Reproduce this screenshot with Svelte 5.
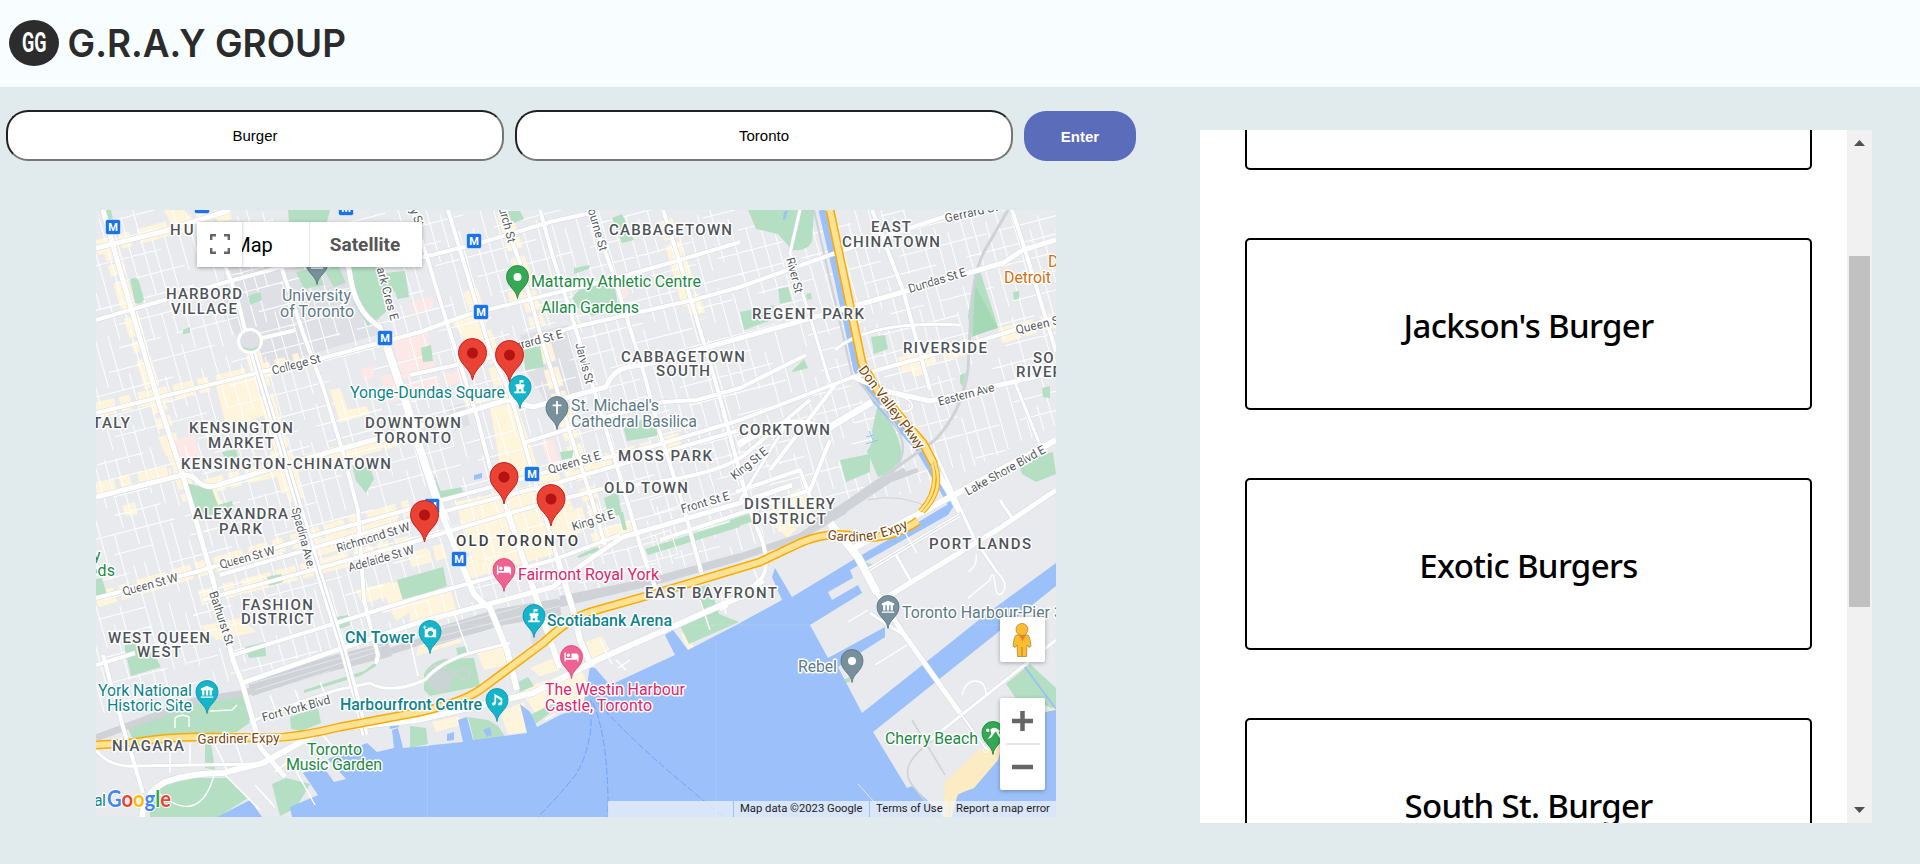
<script>
  let food = $state('Burger');
  let city = $state('Toronto');
  const results = ['', "Jackson's Burger", 'Exotic Burgers', 'South St. Burger'];

  // Small deterministic generator so side streets are laid out the same way each time.
  let seed = 11;
  const rnd = () => (seed = (seed * 16807) % 2147483647) / 2147483647;

  function sideStreets() {
    let d = '';
    for (let x = -60; x < 1060; x += 10 + rnd() * 6) {
      let y = 205 + rnd() * 30;
      while (y < 740) {
        const len = 35 + rnd() * 90;
        const a = x + 0.28 * (y - 210);
        d += `M${a.toFixed(1)} ${y.toFixed(1)}l${(0.28 * len).toFixed(1)} ${len.toFixed(1)}`;
        y += len + 8 + rnd() * 34;
      }
    }
    for (let c = 225; c < 1010; c += 17 + rnd() * 10) {
      let x = 90 + rnd() * 30;
      while (x < 1060) {
        const len = 30 + rnd() * 80;
        const b = c - 0.26 * (x - 96);
        d += `M${x.toFixed(1)} ${b.toFixed(1)}l${len.toFixed(1)} ${(-0.26 * len).toFixed(1)}`;
        x += len + 8 + rnd() * 50;
      }
    }
    return d;
  }
  const side = sideStreets();

  const parks = [
    'M288 210h42l-3 12h-38z', 'M348 262l28 0 10 50-18 14-14-22z', 'M375 274l30-3 4 26-12 2-2-8-14 4z',
    'M130 279q7-3 9 2l5 18q-2 6-9 4z', 'M248 296l12-4 2 8-12 5z', 'M296 272l22-5 6 18-20 4z', 'M324 270l14-5 8 18-12 4z',
    'M183 330l7-3v6l-7 1z', 'M186 483l26 6 6 16 14-4 2 10-38 6z', 'M222 452l14-3 2 8-13 1z',
    'M352 465l18 2 4 12-8 14-10-12z', 'M572 298l8-9 34-7 4 24-25 10-15-8z', 'M574 268l16-3-1 4-15 5z',
    'M612 218l10-4 12 26-12 3z', 'M508 211l12 0 4 8-12 5z', 'M524 350l16-4 4 21-19 3z', 'M421 348l10-3 2 16-10 1z',
    'M435 475l6 16 20-4 3 6-24 5-5-20z', 'M623 426l32-10 2 12 0 8-30 5z', 'M560 452l14-2-2 8-10 2z',
    'M604 498l14-6 4 24-14-2z', 'M748 210h66l-2 32q-6 10-20 8l-14-16-22-5z', 'M740 312l34-7-2 15-28 10z',
    'M778 289l10-2 4 14-12 3z', 'M806 294l5-1 1 6-5 1z', 'M871 337l14-2 3 14-14 5z', 'M975 272l5-1 18 56-26 10-4-20z',
    'M960 375l6-2-3 14-3-4z', 'M792 371l12-12 4 9-15 4z', 'M878 402q22 30 24 55-8 14-24 20l-11-26q8-10 5-20z',
    'M840 460l30-6 0 18-24 10z', 'M1017 460l36-8 3 22-20 8-14-8z', 'M1042 388l8-2v12l-7-1z', 'M1013 292l6-1 0 8-5 1z',
    'M397 580l46-13 4 19-44 15z', 'M267 577l14-3 2 8-14 4z', 'M336 617l12-2 2 10-13 5z', 'M245 647l20-5 1 14-17 2z',
    'M125 632l14 0 0 20 14 0 8 15-30 9-6-26z', 'M96 579l6-1 5 17-11 4z', 'M128 728l22-12 60-16 35-4 8 24-16 12-40 4-65 2z',
    'M290 717l28-10 3 16-20 8-10-2z', 'M205 744l6 0 4 26-10-2z', 'M150 790l40-12 38 0 20 20-30 19h-68z',
    'M272 784l14-6 24 6-14 24-16 8z', 'M424 674q6-12 20-15l30-1 6 28-50 10-6-6z', 'M456 648l10-2 1 8-9 2z',
    'M468 717l20 3 10 6 8 12-32 3z', 'M410 726l16 2 2 16-18 4z', 'M516 683l12-6 6 9-14 6z', 'M530 715l24-12 6 2-18 14-7 5z',
    'M577 556l20-9 4 3-22 8z', 'M645 549l95-30v8l-92 28z', 'M697 588l12-4 10 30 20 8-50 22-10-20 24-10z',
    'M618 512l5 0 4 18-4 0z', 'M865 562l12 4-12 3z', 'M730 520l24-8 0 9-24 8z', 'M843 680l7-3 0 5-5 1z',
    'M1006 684l24-20 26 24v22l-18-8-14 8z', 'M304 690l60-19 12-9v4l-16 10-56 17z', 'M104 210l5 12 4-2-2-10z'
  ];
  const creams = [
    'M116 285l9-2 8 22-10 4z', 'M215 382l38-11 12 44-26 10-14-4z', 'M330 390l10-2 8 22 18-4 4 8-30 9z', 'M452 322l30-9 6 36-14 2z',
    'M490 408l26-6 24 72-36 12z', 'M460 395l34-8 4 12-32 6z', 'M508 292l14-2 4 14-16 0z', 'M666 248l14-4 14 60-12 2z', 'M122 506l13-4 3 12-12 2z',
    'M158 437l14-3 6 18-12 4z', 'M204 490l10-2 14 24-8 3z', 'M270 452l14-4 12 40-14 6z', 'M345 450l60-16 4 6-46 14-10 12z',
    'M380 585l24-4 8 30-16 10z', 'M356 590l34-8 6 12-34 10z', 'M300 545l96-29 2 16-92 28z', 'M455 502l106-22 22 52-108 30z', 'M455 560l90-24 10 18-90 26z',
    'M590 534l40-14 8 12-42 16z', 'M410 600l40-12 8 28-48 12z', 'M420 640l36-16 6 18-46 14z', 'M476 650l24-6 12 20-28 6z',
    'M586 642l16-6 8 14-18 10z', 'M520 690l60-22 16 34-60 12z', 'M500 712l24-10 4 30-20 2z', 'M432 722l26-6 6 8-28 8z', 'M232 588l12-3 2 8-10 2z',
    'M908 365l18-4 2 12-14 4z', 'M770 504l30-16 10 26-22 24-14-12z', 'M200 626l40-8 16 14-40 8z', 'M680 632l8 18 6-2-6-14z', 'M530 668l24-10 6 12-20 6z', 'M164 210l20-2 6 18-16 4z'
  ];
  const pinks = ['M174 440l20-6 6 22-16 16-6-10z', 'M361 369l12-3 2 12-12 3z', 'M380 376l12-3 10 26-12 4z', 'M393 341l33-10 10 40-34 9z', 'M412 302l20-6 2 12-20 6z', 'M541 442l12-3 6 22-10 3z', 'M620 290l8-3 0 10-6 2z', 'M405 386l34-9 2 14-30 8z', 'M444 374l16-4 2 12-14 4z'];
  const campus = ['M225 262l120-14 42 84-130 38-34-56z', 'M520 335l48-10 14 66-36 10-20-30z', 'M448 408l16-5 6 22-16 6z', 'M528 620l14-4 10 26-18 12z'];

  const roads = [
    [5, 'M103 210L120 270L158 400L182 473L190 500L213 580L233 660L242 683L252 717L260 747L285 777'],
    [4, 'M222 257L237 297L245 330'], [7, 'M253 353L267 400L297 500L317 567L343 650L357 700L365 735'],
    [4, 'M270 225L280 263L303 333L323 387L343 453L358 510L364 600L372 633L378 655L376 664'],
    [5, 'M342 230L350 275Q355 312 380 327L387 347L403 400'], [8, 'M387 347L405 400L418 443L437 500L446 520'],
    [6, 'M443 517L460 560L474 594Q482 603 490 608L507 650L517 690'], [4, 'M412 210L430 267L447 323L477 417L490 467L507 510'],
    [6, 'M507 510L537 600L548 634L560 668'], [4, 'M448 210L467 273L490 350L510 393L527 453L557 557'], [6, 'M557 557L573 610L580 640L592 667'],
    [4, 'M500 210L520 263L543 343L570 433L592 500L605 545'], [4, 'M540 210L553 257L577 333L613 453L643 555L660 600'],
    [4, 'M590 210L613 273L643 370L660 433L683 505L702 575'], [4, 'M663 210L680 263L717 387L750 510L763 543Q770 570 760 580L740 597'],
    [3, 'M800 210L790 253L810 317L830 383'], [4, 'M872 210L903 290L930 390'], [4, 'M1012 210L1025 250L1056 352'],
    [3, 'M1014 380L1040 445'], [3, 'M935 453L955 497L975 540L997 572'],
    [5, 'M96 248L165 231L230 210'], [4, 'M96 320L130 310L223 283L285 266L345 262'], [4, 'M96 413L257 373L323 358L420 332L467 315L567 290L617 278L680 260L740 242'],
    [4, 'M250 341L296 330'], [4, 'M410 375L493 357L570 328L693 300L740 287L830 255L940 218L1000 205'],
    [5, 'M96 497L182 475Q193 474 198 482Q207 489 218 485L290 463L373 440L507 400L533 407L606 387Q613 370 628 367L648 364L740 338L840 310L903 292L1003 263L1023 250L1056 240'],
    [4, 'M523 443L613 415L663 402L697 400L740 388L806 355'], [4, 'M96 598L203 570L323 533L443 500L543 473L657 445L740 420L853 377L960 347L1056 317'],
    [4, 'M203 600L410 543L520 510L605 488Q720 478 748 452L810 400'], [4, 'M220 575L410 520L560 482L740 430'],
    [4, 'M96 665L135 653'], [4, 'M233 655L330 625L410 600L553 560L620 535'], [5, 'M242 683L337 650L420 622L553 587Q580 565 623 537L740 503L792 485'],
    [3, 'M250 722L300 702L337 690L370 683Q390 695 425 680Q440 662 470 653L510 643'],
    [6, 'M142 817Q145 792 165 782Q190 773 223 773L263 763L323 730L417 720L533 693L597 660L740 597L763 580'],
    [4, 'M103 655L123 727L143 793'], [3, 'M96 750Q110 768 135 766L260 764'], [4, 'M420 258L480 243L550 222L590 213'],
    [4, 'M660 540L810 490L830 440'], [5, 'M853 377L890 392L930 401L1056 372'], [7, 'M738 445Q790 410 825 430L872 402'],
    [4, 'M770 470L835 385'], [3, 'M740 500L790 418'], [4, 'M736 492L800 470L815 510'],
    [8, 'M830 523L858 557L877 593'], [6, 'M850 550L930 508L1056 440'], [6, 'M933 465L952 497L960 512'], [5, 'M1056 490L1000 528L887 597'],
    [5, 'M877 593L903 633L960 713'], [2, 'M960 713L987 750'], [3, 'M870 613L902 634'], [3, 'M930 740L1056 640'],
    [4, 'M868 570L960 515'], [3, 'M896 555L912 583'], [3, 'M1000 500L1014 521'],
    [3, 'M835 350Q870 320 960 325'], [2, 'M886 393Q915 398 912 408Q905 416 880 406']
  ];
  const commercial = 'M96 248L230 212M96 410L257 373L300 360M108 240L150 380L190 500M96 490L182 470M205 487L400 438M253 353L297 500M96 600L410 507M470 290L540 500M505 215L590 500M540 480L680 440M665 220L700 320M410 560L600 510M200 598L410 543M900 365L980 343M1000 336L1056 320';

  const hoods = [
    ['HURON', 171, 62, 235], ['HARBORD', 167, 75, 299], ['VILLAGE', 172, 65, 314], ['ITALY', 88, 42, 428], ['KENSINGTON', 190, 103, 433], ['MARKET', 209, 65, 448],
    ['KENSINGTON-CHINATOWN', 182, 209, 469], ['DOWNTOWN', 366, 95, 428], ['TORONTO', 375, 76, 443], ['ALEXANDRA', 194, 94, 519], ['PARK', 220, 42, 534],
    ['FASHION', 243, 70, 610], ['DISTRICT', 242, 72, 624], ['WEST QUEEN', 109, 101, 643], ['WEST', 138, 43, 657], ['NIAGARA', 113, 71, 751],
    ['CABBAGETOWN', 610, 122, 235], ['EAST', 872, 39, 232], ['CHINATOWN', 843, 97, 247], ['REGENT PARK', 753, 111, 319], ['RIVERSIDE', 904, 83, 353],
    ['SOUTH', 1034, 53, 363], ['RIVERDALE', 1017, 86, 377], ['CABBAGETOWN', 622, 123, 362], ['SOUTH', 657, 53, 376], ['MOSS PARK', 619, 93, 461],
    ['OLD TOWN', 605, 83, 493], ['CORKTOWN', 740, 90, 435], ['DISTILLERY', 745, 90, 509], ['DISTRICT', 753, 73, 524], ['EAST BAYFRONT', 646, 131, 598],
    ['OLD TORONTO', 457, 121, 546, 'strong'], ['PORT LANDS', 930, 101, 549]
  ];
  const places = [
    ['University', 283, 68, 301, 'slate'], ['of Toronto', 281, 73, 317, 'slate'], ['Mattamy Athletic Centre', 532, 169, 287, 'green'], ['Allan Gardens', 542, 97, 313, 'green'],
    ['Yonge-Dundas Square', 351, 154, 398, 'teal'], ["St. Michael's", 572, 87, 411, 'slate'], ['Cathedral Basilica', 572, 125, 427, 'slate'],
    ['Fairmont Royal York', 519, 140, 580, 'pink'], ['Scotiabank Arena', 548, 124, 626, 'teal bold'], ['CN Tower', 346, 69, 643, 'teal bold'],
    ['York National', 99, 93, 696, 'teal'], ['Historic Site', 108, 84, 711, 'teal'], ['Harbourfront Centre', 341, 141, 710, 'teal bold'],
    ['The Westin Harbour', 546, 139, 695, 'pink'], ['Castle, Toronto', 546, 106, 711, 'pink'], ['Toronto', 308, 54, 755, 'green'], ['Music Garden', 287, 95, 770, 'green'],
    ['Toronto Harbour-Pier', 903, 147, 618, 'slate'], ['3', 1055, 8, 618, 'slate'], ['Rebel', 799, 38, 672, 'slate'], ['Cherry Beach', 886, 92, 744, 'green'],
    ['Detroit', 1005, 46, 283, 'orange'], ['D', 1049, 10, 267, 'orange'], ['y', 94, 7, 561, 'green'], ['ods', 89, 26, 576, 'green'], ['al', 95, 11, 806, 'teal']
  ];
  const streets = [
    ['College St', 296, 364, -15, 50], ['Queen St W', 150, 584, -15, 57], ['Queen St W', 247, 557, -15, 57], ['Richmond St W', 373, 537, -17, 76], ['Adelaide St W', 381, 558, -16, 68],
    ['Spadina Ave.', 304, 538, 75, 63], ['Bathurst St', 222, 618, 72, 56], ['Fort York Blvd', 296, 708, -15, 70], ['Park Cres E', 387, 290, 75, 62], ['Bay St', 415, 211, 68, 32], ['Church St', 506, 218, 75, 50],
    ['Sherbourne St', 594, 215, 74, 74], ['Jarvis St', 585, 363, 75, 42], ['Gerrard St E', 533, 341, -15, 61], ['Queen St E', 574, 462, -16, 54], ['King St E', 593, 520, -17, 44],
    ['Front St E', 705, 502, -16, 50], ['King St E', 749, 463, -39, 44], ['River St', 795, 275, 75, 36], ['Dundas St E', 937, 280, -17, 60], ['Gerrard St E', 976, 211, -13, 64],
    ['Queen St E', 1044, 323, -13, 58], ['Eastern Ave', 966, 394, -15, 58], ['Lake Shore Blvd E', 1005, 470, -29, 90]
  ];
  const metros = [[113, 227], [202, 206], [346, 208], [385, 338], [474, 241], [481, 312], [532, 474], [432, 506], [459, 559]];
  const pins = [
    [517.5, 277, '#34a853', '#188038', 'dot'], [520, 387, '#12b5cb', '#0f8f9f', 'hall'], [557, 408, '#78909c', '#546e7a', 'cross'], [504, 570, '#f06292', '#d84377', 'bed'],
    [534, 616, '#12b5cb', '#0f8f9f', 'hall'], [430, 632, '#12b5cb', '#0f8f9f', 'camera'], [497, 700, '#12b5cb', '#0f8f9f', 'note'], [571.5, 657, '#f06292', '#d84377', 'bed'],
    [207, 692, '#12b5cb', '#0f8f9f', 'museum'], [888, 607, '#78909c', '#546e7a', 'museum'], [852, 661, '#78909c', '#546e7a', 'dot'], [993, 733, '#34a853', '#188038', 'beach'], [317, 263, '#78909c', '#546e7a', 'museum']
  ];
  const glyphs = {
    hall: 'M-.5-8H4V-5H.8V-3H5V0H4V5H6.500V7H-6.500V5H-4V0H-5V-3H-.5ZM-1.300 2.500V5H1.300V2.500Z',
    cross: 'M-1-8H1V-4H5V-2H1V7H-1V-2H-5V-4H-1Z',
    bed: 'M-8-5H-6.500V1H0V-4H5Q8-4 8-1V5H6.500V3H-6.500V5H-8ZM-5.500-2A2 2 0 1 0-1.500-2A2 2 0 1 0-5.500-2',
    camera: 'M-6-3H-3L-2-5H3L4-3H7V6H-6ZM-8-6H-6.500V-7.500H-5.500V-6H-4V-5H-5.500V-3.500H-6.500V-5H-8Z',
    note: 'M-3-7L6-2V4Q5 7 2 6Q0 4 3 2.500H4V0L-1-3V3Q-2 7-5 6Q-7 3.500-3 2Z',
    museum: 'M-7-4L0-7L7-4V-2H-7ZM-5.500-2H-3V4H-5.500ZM-1.300-2H1.300V4H-1.300ZM3-2H5.500V4H3ZM-7 5H7V6.500H-7Z',
    beach: 'M-8-3a2 2 0 1 0 4 0a2 2 0 1 0-4 0M-3-4Q2-9 8-2L6-1L10 5L8 6L3-2L-2 5L-6 7L-2 1Z'
  };
  const markers = [[472.5, 353], [509.5, 355], [504, 477], [551, 499], [424.5, 515]];
</script>

<header>
  <svg class="logo" width="50" height="46" viewBox="0 0 50 46" role="img" aria-label="GG">
    <ellipse cx="25" cy="23" rx="25" ry="23" fill="#2d2c2c" />
    <text x="13" y="32" textLength="24.500" lengthAdjust="spacingAndGlyphs">GG</text>
  </svg>
  <svg class="brand" width="290" height="46" viewBox="0 0 290 46">
    <text x="-1.500" y="36.500" textLength="278.500" lengthAdjust="spacingAndGlyphs">G.R.A.Y GROUP</text>
  </svg>
</header>

<main>
  <section class="left">
    <form onsubmit={(e) => e.preventDefault()}>
      <input bind:value={food} aria-label="Food" />
      <input bind:value={city} aria-label="City" />
      <button>Enter</button>
    </form>

    <div class="map">
      <svg width="960" height="607" viewBox="96 210 960 607">
        <defs>
          <clipPath id="urban"><path d="M96 210H1056V425L930 490L830 505L740 552L610 590L440 625L340 655L240 678L96 715Z" /></clipPath>
          <path id="gardiner-label" d="M827 539Q872 548 915 524" />
        </defs>
        <rect x="96" y="210" width="960" height="607" fill="#e8eaed" />
        {#each campus as d}<path {d} fill="#dfe0e5" />{/each}
        <path d={commercial} class="commercial" />
        {#each creams as d}<path {d} fill="#fef5dc" />{/each}
        {#each pinks as d}<path {d} fill="#fce8e6" />{/each}
        <path d={side} clip-path="url(#urban)" class="side" />
        {#each parks as d}<path {d} fill="#b4dfc3" />{/each}
        <path d="M975 285L998 328L973 336Z" fill="#a5d9b5" />

        <g fill="#9cc0f9">
          <path d="M217 817L250 800L262 817ZM292 817L290 807L318 795L303 773L322 765L334 782L346 779L328 759L367 743L377 752L394 748L392 730L398 728L403 748L427 746L433 745L463 742L458 720L467 717L473 740L527 733L520 704L530 712L537 727L560 715L583 707L590 667L595 668L610 685L675 655L665 635L673 630L688 650L740 623L782 600L772 577L775 568L792 597L853 560L900 533L950 503L955 504L948 515L850 570L853 578L828 592L832 600L858 585L862 593L810 625L828 658L885 627L885 637L838 667L862 713L940 651L985 615L1056 563V586L873 732L907 788L912 786L927 800L945 817Z" />
          <path d="M1056 709L1020 720L1000 750L973 787L957 795L952 817H1056Z" />
          <path d="M389 724l9-2 1 5-9 2zM447 734l7-2 0 8-7 1zM483 730l7-3 2 8-5 2zM474 475l8-2 0 5-8 2zM784 212l4-2-3 10-2 0z" />
        </g>
        <path d="M945 782L978 750L1002 745L998 760L974 788L958 794L951 817H943Z" fill="#fdebc3" />
        <path d="M1040 715l16-9v4l-14 2z" fill="#fdebc3" />
        <path d="M822 210L838 280L857 370L877 402L920 450L952 505" fill="none" stroke="#9cc0f9" stroke-width="7" />
        <path d="M1024 666L1056 709" stroke="#9cc0f9" stroke-width="2" />
        <path d="M866 437l8-2m-5-4l4 9m-7 4l12-4" stroke="#9cc0f9" fill="none" />

        <g fill="none" stroke="#cfd2d7">
          <path d="M96 738L195 701L240 694L320 669L378 655L410 645L470 624L575 600L650 582L740 557L800 537L845 510" stroke-width="7" />
          <path d="M250 689L330 664L390 649" stroke-width="15" />
          <path d="M425 640L500 617L560 607" stroke-width="17" />
          <path d="M560 600L650 582L740 557" stroke-width="8" />
          <path d="M815 525L870 488L905 470M830 520L890 480L918 470" stroke-width="5" />
          <path d="M800 535L900 465L935 440Q962 412 968 370L971 310Q974 270 985 250L1008 210" stroke-width="3" />
          <path d="M814 210L830 280L852 374L878 404Q908 435 902 455Q897 475 870 490L815 520" stroke-width="2.2" />
          <path d="M912 720L945 775M936 738Q895 765 913 786L926 802" stroke-width="1.5" />
          <path d="M868 500Q900 492 935 510" stroke-width="1" />
        </g>
        <g fill="none" stroke="#eef0f2" stroke-width=".7">
          <path d="M250 684L385 645M255 690L380 651M260 694L330 671M420 634L520 607M425 640L560 606M430 645L540 618" />
        </g>
        <circle cx="440" cy="681" r="11" fill="#cfd2d7" opacity=".85" />
        <path d="M428 670q8-8 18-2l16 11q8 2 7-6-4-8-14 0l-12 8" fill="none" stroke="#cfd2d7" stroke-width="2" />

        {#each roads as [w, d]}<path {d} class="casing" stroke-width={w + 1} />{/each}
        {#each roads as [w, d]}<path {d} class="road" stroke-width={w} />{/each}
        <path d="M253 353L297 500L317 567L343 650L365 735M868 570L960 515" class="median" />
        <circle cx="250" cy="341" r="11.500" fill="#dfe0e5" stroke="#fff" stroke-width="3" />
        <path d="M241 345q9 7 18 0l-2 4q-7 3-13 0z" fill="#b4dfc3" />

        <g fill="none" stroke="#fff" stroke-width="1.4">
          <path d="M175 728v-10q6-5 14-1v10M210 711l22-1 5-5M155 790q45 40 60-18M170 745v28M215 745l12 25M190 765v-22M233 735l10 30M255 785l20 22M225 775l35 35M275 772l15-12 25 45M318 730l18 20M968 572q10-6 8-18M997 572q12 12 6 20t-8-8-5-4l-22 18M875 665l32-20M848 622l20-12M962 695q4-15 14-14t10 14M750 560l12 30M905 533l12 20M545 720l10-6M616 660l10 10m-8-2l12-8M700 600l10 30M720 590l6 24M270 695l8 22M295 690l8 20M320 682l8 20M410 640l8 36M455 615l14 40M265 740l45-5M720 610l8-4M600 640l12 24" />
        </g>
        <g fill="none" stroke="#fff" stroke-width="1"><path d="M640 540l30-10 8 24-30 8zM655 535l8 24M650 500l24-8 5 14-24 8z" /></g>
        <circle cx="986" cy="750" r="2.5" fill="none" stroke="#fff" />

        <g fill="none" stroke-linejoin="round">
          <path d="M96 745L130 743Q165 737 200 737L270 738Q300 737 340 727L420 712Q460 703 480 690L543 643Q570 618 590 612L657 593L760 562L800 543Q830 530 860 537Q890 540 918 521M830 210L853 320L862 363L877 390L923 443L934 464" stroke="#f9ab00" stroke-width="9" />
          <path d="M96 745L130 743Q165 737 200 737L270 738Q300 737 340 727L420 712Q460 703 480 690L543 643Q570 618 590 612L657 593L760 562L800 543Q830 530 860 537Q890 540 918 521M830 210L853 320L862 363L877 390L923 443L934 464" stroke="#fde293" stroke-width="6" />
          <path d="M932 463Q940 490 920 511M935 463Q945 490 923 512" stroke="#f9ab00" stroke-width="4.5" />
          <path d="M932 463Q940 490 920 511M935 463Q945 490 923 512" stroke="#fde293" stroke-width="2.4" />
          <path d="M591 700V727Q588 755 575 776Q555 800 538 817M593 703Q609 740 608 817M598 703Q640 750 724 817" stroke="#72a3f5" stroke-dasharray="7 2.5" />
          <path d="M858 784L875 803L885 817" stroke="#dfe7f3" />
          <path d="M427.500 746V817M716 640V817M1003 500V690M96 625H1000" stroke="#fff" opacity=".15" />
        </g>

        <g class="street">
          {#each streets as [t, x, y, r, w]}
            <text transform="translate({x} {y}) rotate({r})" y="4.500" x={-w / 2} textLength={w}>{t}</text>
          {/each}
        </g>
        <g class="highway-name">
          <text x="197.500" y="743" textLength="82" transform="rotate(-1 239 738)">Gardiner Expy</text>
          <text><textPath href="#gardiner-label" textLength="84">Gardiner Expy</textPath></text>
          <text transform="translate(892 407) rotate(53)" x="-50" y="5" textLength="100">Don Valley Pkwy</text>
        </g>

        {#each metros as [x, y]}
          <g transform="translate({x} {y})">
            <rect x="-7.500" y="-7.500" width="15" height="15" rx="2" fill="#1a73e8" stroke="#fff" stroke-opacity=".5" />
            <text class="metro" text-anchor="middle" y="4">M</text>
          </g>
        {/each}
        {#each hoods as [t, x, w, y, c]}<text class="hood {c ?? ''}" x={x - 1} {y} textLength={w + 1}>{t}</text>{/each}
        {#each places as [t, x, w, y, c]}<text class="place {c}" x={x - 1} {y} textLength={w + 1}>{t}</text>{/each}

        {#each pins as [x, y, fill, edge, icon]}
          <g transform="translate({x} {y})">
            <path d="M0 21.500C-1 12-11 10-11-.5A11 11 0 0 1 11-.5C11 10 1 12 0 21.500Z" {fill} stroke={edge} stroke-width=".8" />
            {#if icon === 'dot'}<circle r="4" fill="#fff" />{:else}<path d={glyphs[icon]} fill="#fff" fill-rule="evenodd" transform="scale(.88)" />{/if}
            {#if icon === 'camera'}<circle cx=".5" cy="1.300" r="2.600" {fill} />{/if}
          </g>
        {/each}
        {#each markers as [x, y]}
          <g transform="translate({x} {y})">
            <path d="M0 27C-2 14-14 12-14-.5A14 14 0 0 1 14-.5C14 12 2 14 0 27Z" fill="#ea4335" stroke="#c5221f" />
            <circle r="5.500" fill="#b31412" />
          </g>
        {/each}

        <text class="google" x="107" y="807" textLength="64" lengthAdjust="spacingAndGlyphs"><tspan fill="#4285f4">G</tspan><tspan fill="#ea4335">o</tspan><tspan fill="#fbbc04">o</tspan><tspan fill="#4285f4">g</tspan><tspan fill="#34a853">l</tspan><tspan fill="#ea4335">e</tspan></text>
      </svg>

      <div class="types">
        <button class="type on">Map</button>
        <button class="type">Satellite</button>
        <button class="full" aria-label="Toggle fullscreen">
          <svg width="20" height="20" viewBox="0 0 20 20"><path d="M1.200 6V1.200H6M14 1.200h4.800V6M18.800 14v4.800H14M6 18.800H1.200V14" fill="none" stroke="#666" stroke-width="2.400" /></svg>
        </button>
      </div>

      <button class="pegman" aria-label="Street View">
        <svg width="20" height="34" viewBox="0 0 20 34">
          <g fill="#fbbc2d" stroke="#a8893f" stroke-width=".8">
            <path d="M4 12L16 12Q18 14 19 23Q17 26 15 22L14.500 33.500H5.500L5 22Q3 26 1 23Q2 14 4 12Z" />
            <circle cx="10" cy="6.500" r="6" />
          </g>
          <path d="M7 12h7l-3.500 6z" fill="#e37f32" /><path d="M10 24v9" stroke="#a8893f" />
        </svg>
      </button>

      <div class="zoom">
        <button aria-label="Zoom in"><svg width="21" height="20" viewBox="0 0 21 20"><path d="M0 10h21M10.500 0v20" stroke="#666" stroke-width="4.500" /></svg></button>
        <button aria-label="Zoom out"><svg width="21" height="20" viewBox="0 0 21 20"><path d="M0 10h21" stroke="#666" stroke-width="4.500" /></svg></button>
      </div>

      <div class="credits">
        <span class="blank"></span><span>Map data ©2023 Google</span><span>Terms of Use</span><span>Report a map error</span>
      </div>
    </div>
  </section>

  <aside>
    <div class="list">
      {#each results as name}<article>{name}</article>{/each}
    </div>
    <div class="bar">
      <svg width="11" height="6" viewBox="0 0 11 6"><path d="M0 6L5.500 0L11 6Z" fill="#505050" /></svg>
      <div class="track"><div class="thumb"></div></div>
      <svg width="11" height="6" viewBox="0 0 11 6"><path d="M0 0L5.500 6L11 0Z" fill="#505050" /></svg>
    </div>
  </aside>
</main>

<style>
  :global(body) { background: #e1eaec; overflow: hidden; }
  header { display: flex; align-items: center; gap: 10px; box-sizing: border-box; height: 87px; padding: 0 0 1px 9px; background: #f8feff; }
  .logo text { font: 700 27.500px 'Roboto', sans-serif; fill: #fff; }
  .brand { overflow: visible; }
  .brand text { font: 600 38px 'Inter', sans-serif; fill: #2b2b2b; }
  main { display: flex; height: 777px; }
  .left { width: 1200px; padding-top: 23px; box-sizing: border-box; }
  form { display: flex; align-items: center; gap: 11px; height: 51px; padding-left: 6px; }
  input { box-sizing: border-box; width: 498px; height: 51px; padding: 0; border: 2px solid; border-color: #202124 #767676 #767676 #202124; border-radius: 22px; background: #fff; text-align: center; font: 15px 'Liberation Sans', Arial, sans-serif; color: #000; }
  form button { width: 112px; height: 50px; margin-top: 1px; padding: 0; border: 0; border-radius: 22px; background: #5b6cba; color: #fff; font: 700 15px 'Liberation Sans', Arial, sans-serif; }
  .map { position: relative; width: 960px; height: 607px; margin: 49px 0 0 96px; overflow: hidden; font-family: 'Roboto', sans-serif; }
  .map > svg { display: block; }
  .commercial { fill: none; stroke: #fef5dc; stroke-width: 15; stroke-dasharray: 20 5 11 8 30 6; }
  .side { fill: none; stroke: #fff; stroke-width: 1.1; opacity: .9; }
  .casing { fill: none; stroke: #d8dae0; stroke-linejoin: round; }
  .road { fill: none; stroke: #fff; stroke-linejoin: round; }
  .median { fill: none; stroke: #dcdee3; stroke-width: 1.2; }
  .map text { paint-order: stroke; stroke: #fff; stroke-width: 3px; stroke-linejoin: round; }
  .hood { font-size: 15px; font-weight: 500; fill: #50545a; }
  .map .strong { fill: #3c4043; }
  .place { font-size: 16px; }
  .bold { font-weight: 500; }
  .slate { fill: #5c7a88; }
  .green { fill: #1c8a43; }
  .teal { fill: #0d848e; }
  .pink { fill: #e0246d; }
  .orange { fill: #d56e0c; }
  .street { font-size: 12px; fill: #55595e; }
  .highway-name { font-size: 13.500px; fill: #7a450c; }
  .map text.metro { font-size: 11px; font-weight: 700; fill: #fff; stroke: none; }
  .map text.google { font: 700 22px 'Lato', sans-serif; stroke-width: 2px; }
  .map button { display: flex; align-items: center; justify-content: center; padding: 0; border: 0; background: #fff; }
  .types { position: absolute; left: 101px; top: 12px; display: flex; width: 225px; height: 45px; border-radius: 2px; background: #fff; box-shadow: 0 1px 4px rgba(0, 0, 0, .3); }
  .types .type { width: 113px; color: #565656; font: 700 19px 'Roboto', sans-serif; border-right: 1px solid #e8e8e8; }
  .types .on { color: #000; font-size: 20px; font-weight: 400; }
  .types .type:nth-child(2) { width: 112px; padding-right: 2px; border: 0; }
  .types .full { position: absolute; left: 0; top: 0; width: 45px; height: 45px; padding-bottom: 1px; box-shadow: 1px 0 2px rgba(0, 0, 0, .15); }
  .map .pegman { position: absolute; left: 904px; top: 407px; width: 45px; height: 45px; padding-right: 2px; border-radius: 2px; box-shadow: 0 1px 4px rgba(0, 0, 0, .3); }
  .zoom { position: absolute; left: 904px; top: 488px; width: 45px; height: 92px; border-radius: 2px; background: #fff; box-shadow: 0 1px 4px rgba(0, 0, 0, .3); }
  .zoom button { width: 34px; height: 45px; margin: 0 auto; }
  .zoom button + button { border-top: 2px solid #e6e6e6; }
  .credits { position: absolute; right: 0; bottom: 0; display: flex; height: 16px; color: #222; font-size: 11.250px; line-height: 16px; white-space: nowrap; }
  .credits span { box-sizing: border-box; padding-left: 6px; margin-left: 1px; background: rgba(241, 244, 250, .72); width: 135px; }
  .credits .blank { width: 125px; }
  .credits span:nth-child(3) { width: 79px; }
  .credits span:nth-child(4) { width: 106px; }
  aside { display: flex; width: 672px; height: 693px; margin-top: 43px; overflow: hidden; background: #fff; }
  .list { display: flex; flex-direction: column; gap: 68px; width: 647px; padding: 0 35px 0 45px; box-sizing: border-box; margin-top: -132px; }
  article { display: flex; flex: none; align-items: center; justify-content: center; box-sizing: border-box; height: 172px; padding-top: 3px; border: 2px solid #000; border-radius: 5px; color: #000; font: 500 33px 'Noto Sans', sans-serif; letter-spacing: -.65px; }
  .bar { display: flex; flex-direction: column; align-items: center; width: 25px; box-sizing: border-box; padding: 10px 0; background: #f1f1f1; }
  .bar svg { flex: none; }
  .track { flex: 1; padding-top: 110px; }
  .thumb { width: 21px; height: 351px; background: #c1c1c1; }
</style>
